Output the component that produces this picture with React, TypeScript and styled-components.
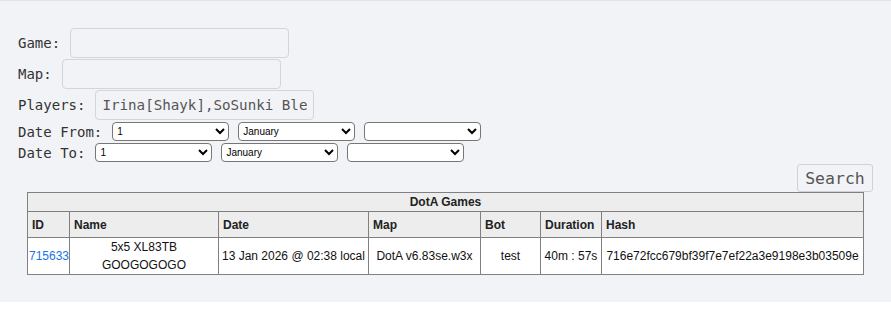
import React from "react";
import styled, { createGlobalStyle } from "styled-components";

const GlobalStyle = createGlobalStyle`
  body {
    margin: 0;
    background: #ffffff;
  }
`;

const MONTHS = [
  "January", "February", "March", "April", "May", "June",
  "July", "August", "September", "October", "November", "December",
];
const DAYS = Array.from({ length: 31 }, (_, i) => String(i + 1));

interface ICell {
  align?: string;
  pl?: string;
}

const Page = styled.div`
  background: #f2f3f7;
  border-top: 1px solid #e1e3e8;
  padding: 27px 18px 27px;
  font-family: "DejaVu Sans Mono", "Liberation Mono", monospace;
`;

const Form = styled.form`
  display: flex;
  flex-direction: column;
  gap: 1px;
`;

const FieldRow = styled.div`
  display: flex;
  align-items: center;
  gap: 10px;
  height: 30px;
`;

const DateRow = styled.div`
  display: flex;
  align-items: center;
  gap: 10px;
  height: 19px;
  margin-top: 1px;
`;

const Label = styled.label`
  font-size: 14px;
  color: #333;
  white-space: pre;
`;

const TextInput = styled.input`
  box-sizing: border-box;
  width: 219px;
  height: 30px;
  margin: 0;
  padding: 0 6px 1px;
  border: 1px solid #d3d5d9;
  border-radius: 4px;
  background: #f2f3f7;
  font-family: "DejaVu Sans Mono", "Liberation Mono", monospace;
  font-size: 14.2px;
  line-height: normal;
  color: #555;
  outline: none;
`;

const Selects = styled.div`
  display: flex;
  gap: 9px;
`;

const Select = styled.select`
  box-sizing: border-box;
  width: 117px;
  height: 19px;
  margin: 0;
  font-family: "Liberation Sans", Arial, sans-serif;
  font-size: 10px;
  color: #000;
  background: #fff;
  border: 1px solid #767676;
  border-radius: 4px;
`;

const SearchBar = styled.div`
  display: flex;
  justify-content: flex-end;
  margin-top: 2px;
`;

const SearchButton = styled.button`
  box-sizing: border-box;
  width: 76px;
  height: 28px;
  padding: 0;
  border: 1px solid #cfd1d6;
  border-radius: 3px;
  background: #f2f3f7;
  font-family: "DejaVu Sans Mono", "Liberation Mono", monospace;
  font-size: 16.5px;
  color: #555;
`;

const TableWrap = styled.div`
  display: flex;
  justify-content: center;
`;

const Table = styled.table`
  width: 836px;
  table-layout: fixed;
  border-collapse: collapse;
  font-family: "Liberation Sans", Arial, sans-serif;
  font-size: 12px;
  line-height: 18px;
  color: #111;
  background: #fff;
`;

const Caption = styled.th`
  padding: 0;
  border: 1px solid #808080;
  background: #ededed;
  font-weight: bold;
  text-align: center;
  color: #222;
`;

const Th = styled.th`
  padding: 4px 4px 3px;
  border: 1px solid #808080;
  background: #ededed;
  font-weight: bold;
  text-align: left;
  color: #222;
`;

const Td = styled.td<ICell>`
  padding: 0 ${({ pl }: ICell) => pl || "3px"};
  border: 1px solid #808080;
  text-align: ${({ align }: ICell) => align || "center"};
  vertical-align: middle;
`;

const Link = styled.a`
  color: #1a73e8;
  text-decoration: none;
`;

const COLUMNS = [
  { title: "ID", width: 42 },
  { title: "Name", width: 149 },
  { title: "Date", width: 150 },
  { title: "Map", width: 112 },
  { title: "Bot", width: 60 },
  { title: "Duration", width: 61 },
  { title: "Hash", width: 262 },
];

const DateSelects = () => (
  <Selects>
    <Select defaultValue="1">
      {DAYS.map((d) => (
        <option key={d} value={d}>{d}</option>
      ))}
    </Select>
    <Select defaultValue="January">
      {MONTHS.map((m) => (
        <option key={m} value={m}>{m}</option>
      ))}
    </Select>
    <Select defaultValue="">
      <option value=""></option>
      <option value="2026">2026</option>
      <option value="2025">2025</option>
    </Select>
  </Selects>
);

export default function App() {
  return (
    <>
      <GlobalStyle />
      <Page>
        <Form onSubmit={(e) => e.preventDefault()}>
          <FieldRow>
            <Label>Game:</Label>
            <TextInput />
          </FieldRow>
          <FieldRow>
            <Label>Map:</Label>
            <TextInput />
          </FieldRow>
          <FieldRow>
            <Label>Players:</Label>
            <TextInput defaultValue="Irina[Shayk],SoSunki_Ble" />
          </FieldRow>
          <DateRow>
            <Label>Date From:</Label>
            <DateSelects />
          </DateRow>
          <DateRow>
            <Label>Date To:</Label>
            <DateSelects />
          </DateRow>
        </Form>
        <SearchBar>
          <SearchButton type="button">Search</SearchButton>
        </SearchBar>
        <TableWrap>
          <Table>
            <colgroup>
              {COLUMNS.map((c) => (
                <col key={c.title} style={{ width: c.width }} />
              ))}
            </colgroup>
            <thead>
              <tr>
                <Caption colSpan={7}>DotA Games</Caption>
              </tr>
              <tr>
                {COLUMNS.map((c) => (
                  <Th key={c.title}>{c.title}</Th>
                ))}
              </tr>
            </thead>
            <tbody>
              <tr>
                <Td pl="1px">
                  <Link href="#">715633</Link>
                </Td>
                <Td>5x5 XL83TB GOOGOGOGO</Td>
                <Td>13 Jan 2026 @ 02:38 local</Td>
                <Td>DotA v6.83se.w3x</Td>
                <Td>test</Td>
                <Td>40m : 57s</Td>
                <Td>716e72fcc679bf39f7e7ef22a3e9198e3b03509e</Td>
              </tr>
            </tbody>
          </Table>
        </TableWrap>
      </Page>
    </>
  );
}
